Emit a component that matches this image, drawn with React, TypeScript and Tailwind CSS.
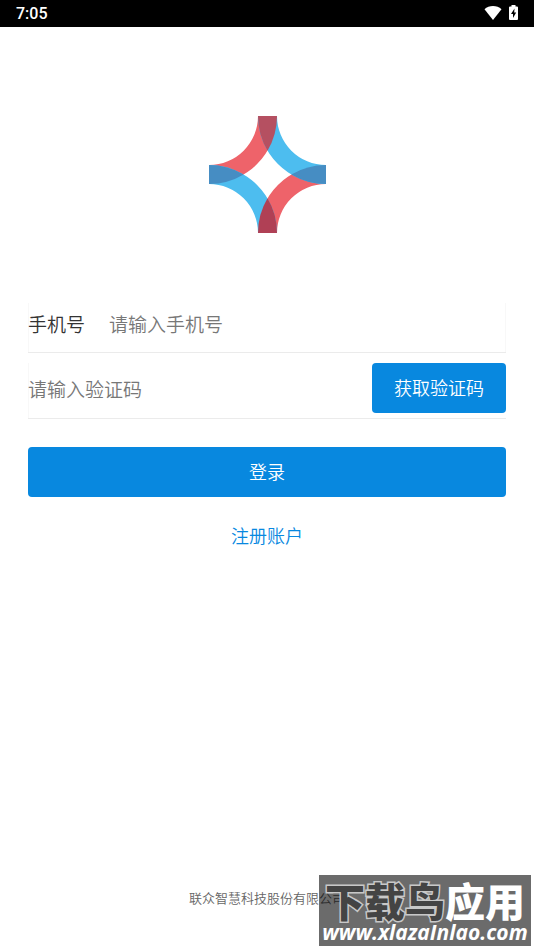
import type { SVGProps } from "react";

const WifiIcon = (props: SVGProps<SVGSVGElement>) => (
    <svg viewBox="0 0 18 14" fill="currentColor" aria-hidden="true" {...props}>
        <path d="M9 14 0.5 3.2C2.8 1.2 5.7 0 9 0s6.2 1.2 8.5 3.2Z" />
    </svg>
);

const BatteryIcon = (props: SVGProps<SVGSVGElement>) => (
    <svg viewBox="0 0 9 15" aria-hidden="true" {...props}>
        <path fill="currentColor" d="M2.5 0h4v1.5H8q1 0 1 1V14q0 1-1 1H1q-1 0-1-1V2.500q0-1 1-1h1.500Z" />
        <path fill="#000" d="M5.500 3.500 2 9h2v4l3.200-5.500h-2Z" />
    </svg>
);

const Logo = (props: SVGProps<SVGSVGElement>) => (
    <svg viewBox="0 0 117 117" role="img" aria-label="Logo" {...props}>
        {/* Brazos */}
        <path fill="#ee636a" d="M49 0H68A68 68 0 0 1 0 68V49A49 49 0 0 0 49 0Z" />
        <path fill="#ee636a" d="M68 117H49A68 68 0 0 1 117 49V68A49 49 0 0 0 68 117Z" />
        <path fill="#4dbdef" d="M68 0H49A68 68 0 0 0 117 68V49A49 49 0 0 1 68 0Z" />
        <path fill="#4dbdef" d="M49 117H68A68 68 0 0 0 0 49V68A49 49 0 0 1 49 117Z" />
        {/* Intersecciones */}
        <path fill="#b55061" d="M49 0H68A68 68 0 0 1 58.500 34.700A68 68 0 0 1 49 0Z" />
        <path fill="#b04055" d="M49 117H68A68 68 0 0 0 58.500 82.300A68 68 0 0 0 49 117Z" />
        <path fill="#468dc3" d="M0 49A68 68 0 0 1 34.700 58.500A68 68 0 0 1 0 68Z" />
        <path fill="#468dc3" d="M117 49A68 68 0 0 0 82.300 58.500A68 68 0 0 0 117 68Z" />
    </svg>
);

const StatusBar = () => (
    <header className="flex h-[27px] items-center justify-between bg-black px-4 text-white">
        <span className="font-[Roboto,sans-serif] text-base font-medium">7:05</span>
        <div className="flex items-center gap-[7px] pb-0.5">
            <WifiIcon className="h-[14px] w-[18px]" />
            <BatteryIcon className="h-[15px] w-[9px]" />
        </div>
    </header>
);

const LoginForm = () => (
    <form className="flex flex-col px-7" onSubmit={(e) => e.preventDefault()}>
        <div className="flex h-[50px] items-center gap-6 border-b border-[#ebebeb] pb-1.5 shadow-[inset_1px_0_#f8f8f8,inset_-1px_0_#f8f8f8]">
            <label htmlFor="phone" className="text-[19px] text-[#333]">手机号</label>
            <input
                id="phone"
                type="tel"
                placeholder="请输入手机号"
                className="min-w-0 flex-1 text-[19px] outline-none placeholder:text-[#777]"
            />
        </div>

        <div className="mt-2.5 flex h-14 items-start border-b border-[#ebebeb] shadow-[inset_1px_0_#f8f8f8]">
            <input
                type="text"
                aria-label="验证码"
                placeholder="请输入验证码"
                className="h-[50px] min-w-0 flex-1 text-[19px] outline-none placeholder:text-[#777]"
            />
            <button type="button" className="h-[50px] w-[134px] rounded bg-[#0888df] pb-0.5 text-lg text-white">
                获取验证码
            </button>
        </div>

        <button type="submit" className="mt-7 h-[50px] rounded bg-[#0888df] pb-0.5 text-lg text-white">
            登录
        </button>

        <a href="#register" className="mt-6 self-center text-lg text-[#0888df]">注册账户</a>
    </form>
);

const Watermark = () => (
    <div className="absolute right-[3px] bottom-1 flex h-[71px] w-[212px] flex-col items-center justify-end bg-black/58 whitespace-nowrap">
        <p className="text-[40px] leading-10 font-black">
            <span className="text-[#444] [-webkit-text-stroke:3px_#c8c8c8] [paint-order:stroke]">下载鸟</span>
            <span className="text-white">应用</span>
        </p>
        <p className="pb-0.5 font-['Open_Sans',sans-serif] text-[21px] leading-6 font-bold text-white italic">www.xlazaInlao.com</p>
    </div>
);

const App = () => {
    return (
        <div className="relative flex min-h-screen flex-col bg-white font-['Noto_Sans_CJK_SC',sans-serif] font-[350]">
            <StatusBar />
            <main className="flex flex-1 flex-col">
                <Logo className="mt-[89px] mb-[70px] size-[117px] self-center" />
                <LoginForm />
            </main>
            <footer className="pb-[42px] text-center text-[13px] leading-5 text-[#666]">
                联众智慧科技股份有限公司
            </footer>
            <Watermark />
        </div>
    );
};

export default App;
